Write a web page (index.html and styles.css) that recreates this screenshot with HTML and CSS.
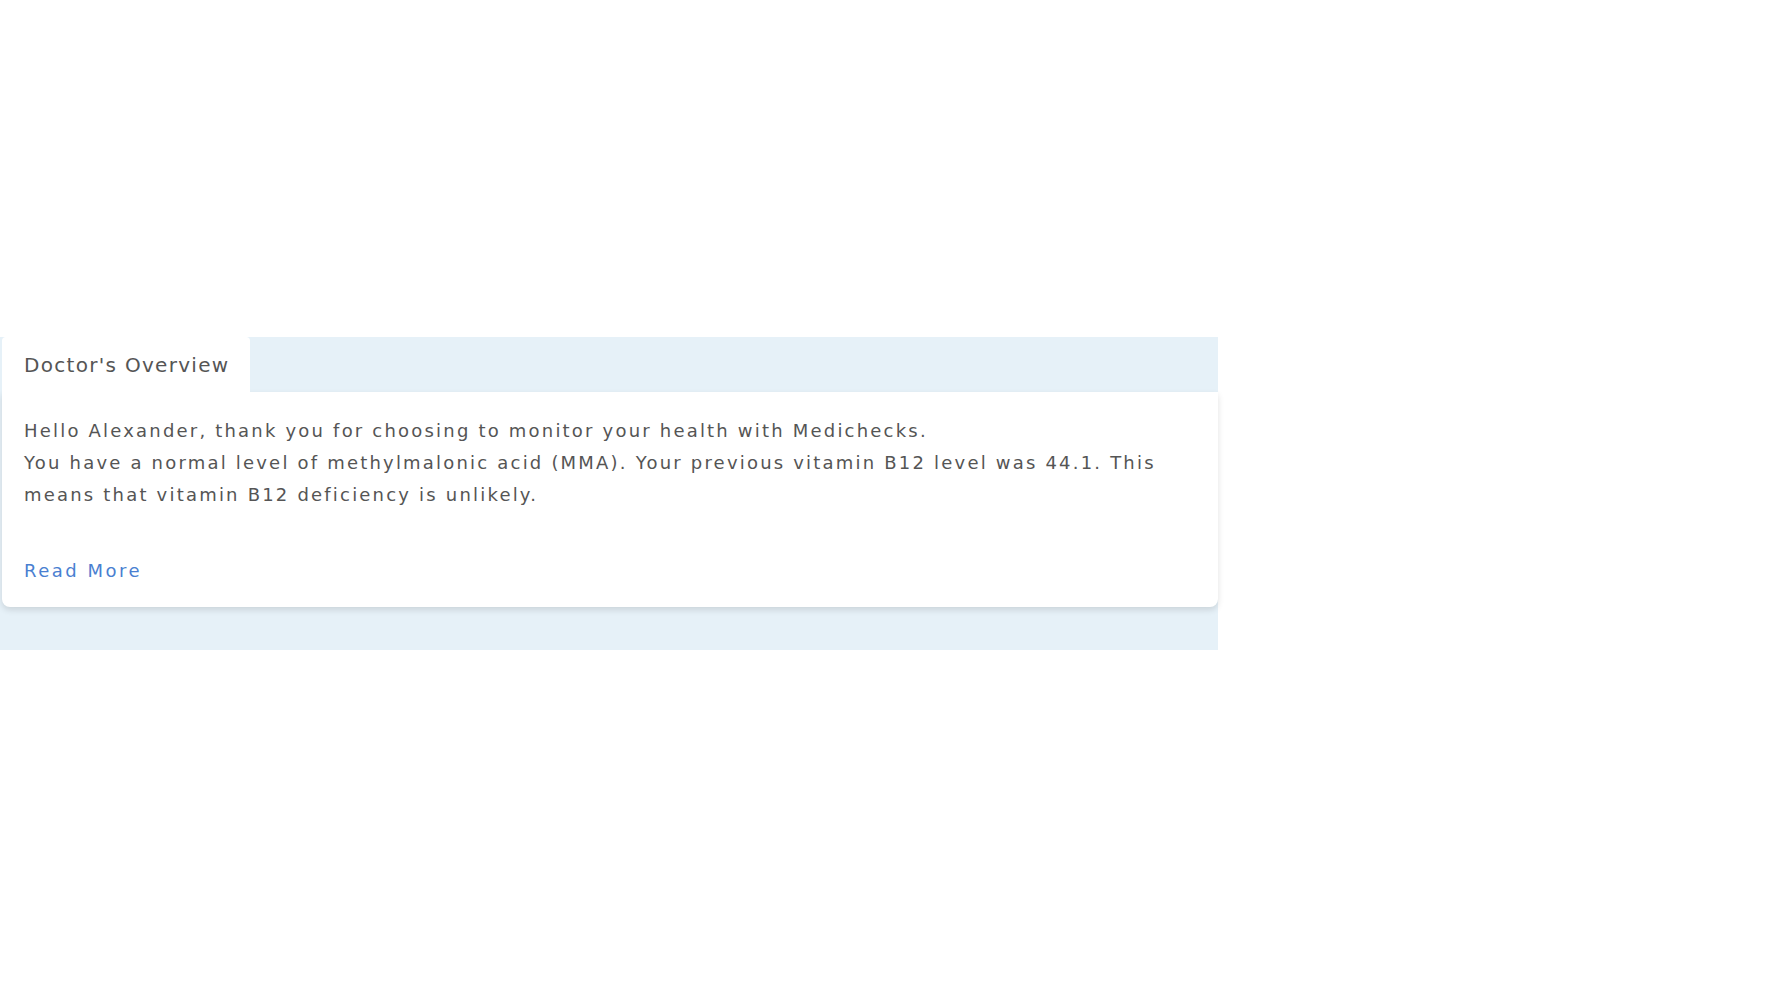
FILE: index.html
```html
<!DOCTYPE html>
<html lang="en">
<head>
  <meta charset="UTF-8">
  <title>Doctor's Overview</title>
  <link rel="stylesheet" href="styles.css">
</head>
<body>
  <div class="results-band">
    <div class="tabs">
      <div class="tab active">Doctor's Overview</div>
    </div>
    <div class="card">
      <p class="overview">
        Hello Alexander, thank you for choosing to monitor your health with Medichecks.<br>
        You have a normal level of methylmalonic acid (MMA). Your previous vitamin B12 level was 44.1. This means that vitamin B12 deficiency is unlikely.
      </p>
      <a href="#" class="read-more">Read More</a>
    </div>
  </div>
</body>
</html>
```

FILE: styles.css
```css
body {
  font-family: 'DejaVu Sans', 'Open Sans', sans-serif;
  margin: 0;
  background: #fff;
  color: #555;
}

.results-band {
  margin-top: 337px;
  width: 1218px;
  background: #e6f1f8;
  padding: 0 0 43px 2px;
  box-sizing: border-box;
}

.tabs {
  display: flex;
}

.tab {
  width: 248px;
  height: 55px;
  box-sizing: border-box;
  padding: 16px 0 0 22px;
  font-size: 20px;
  line-height: 24px;
  letter-spacing: 1.3px;
  color: #555;
  background: #fff;
  border-radius: 4px 4px 0 0;
}

.card {
  background: #fff;
  border-radius: 0 0 8px 8px;
  box-shadow: 0 3px 6px rgba(0, 0, 0, 0.12);
  padding: 23px 14px 24px 22px;
}

.overview {
  margin: 0;
  font-size: 18px;
  line-height: 32px;
  letter-spacing: 2.2px;
  color: #555;
}

.read-more {
  display: block;
  width: max-content;
  margin-top: 48px;
  font-size: 18px;
  line-height: 24px;
  letter-spacing: 2.5px;
  color: #4a7fd1;
  text-decoration: none;
}
```
